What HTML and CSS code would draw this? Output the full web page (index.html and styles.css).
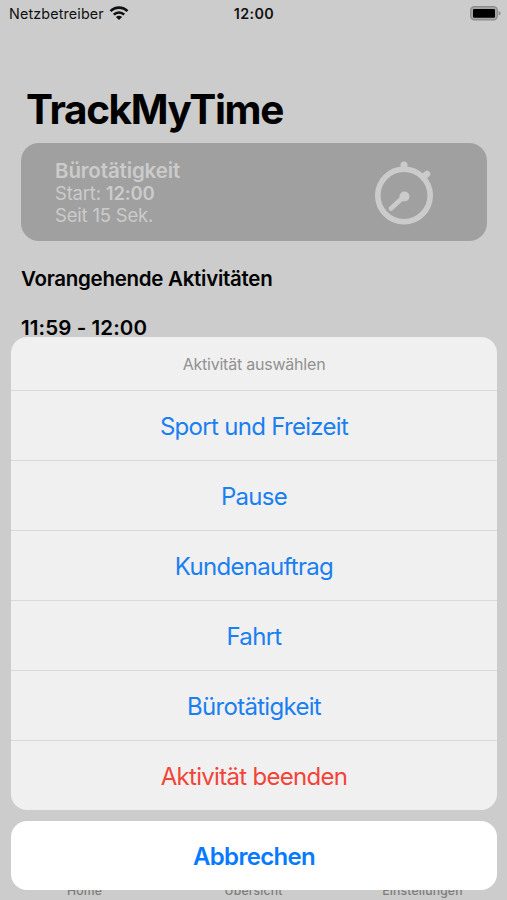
FILE: index.html
```html
<!DOCTYPE html>
<html lang="de">
<head>
  <meta charset="UTF-8" />
  <meta name="viewport" content="width=device-width, initial-scale=1.0" />
  <title>TrackMyTime</title>
  <link rel="stylesheet" href="styles.css">
</head>
<body>
  <div class="screen">
    <header class="status-bar">
      <div class="carrier">
        <span>Netzbetreiber</span>
        <svg class="wifi" viewBox="0 0 20 15">
          <g fill="none" stroke="#111" stroke-width="2.6">
            <path d="M1.5 5.2a12 12 0 0 1 17 0" />
            <path d="M4.8 8.7a7.3 7.3 0 0 1 10.4 0" />
          </g>
          <path d="M10 14.1L6.9 11.1a4.5 4.5 0 0 1 6.2 0z" fill="#111" />
        </svg>
      </div>
      <span class="clock">12:00</span>
      <svg class="battery" viewBox="0 0 31 15">
        <rect x="0.7" y="0.7" width="26.6" height="13.2" rx="3.6" fill="#a6a6a6" stroke="#8c8c8c" stroke-width="1.2" />
        <rect x="3" y="3" width="22" height="8.8" rx="1.2" fill="#000" />
        <path d="M28.6 5c1.4.5 2 1.3 2 2.3s-.6 1.8-2 2.3z" fill="#8c8c8c" />
      </svg>
    </header>

    <h1>TrackMyTime</h1>

    <section class="current">
      <div class="current-text">
        <p class="current-name">Bürotätigkeit</p>
        <p>Start: <b>12:00</b></p>
        <p class="since">Seit 15 Sek.</p>
      </div>
      <svg class="stopwatch" viewBox="0 0 60 66">
        <g fill="none" stroke="#cbcbcb" stroke-linecap="round">
          <circle cx="30" cy="36.5" r="26.2" stroke-width="5.6" />
          <path d="M30 8v-2" stroke-width="7" />
          <path d="M50 17.5l3-2.5" stroke-width="6.5" />
          <path d="M30 37.5L17 49.5" stroke-width="4.6" />
        </g>
        <circle cx="30.5" cy="37.5" r="5" fill="#cbcbcb" />
      </svg>
    </section>

    <h2>Vorangehende Aktivitäten</h2>
    <p class="period">11:59 - 12:00</p>

    <nav class="tabs">
      <span>Home</span>
      <span>Übersicht</span>
      <span>Einstellungen</span>
    </nav>

    <div class="sheet">
      <div class="actions">
        <p class="sheet-title">Aktivität auswählen</p>
        <button>Sport und Freizeit</button>
        <button>Pause</button>
        <button>Kundenauftrag</button>
        <button>Fahrt</button>
        <button>Bürotätigkeit</button>
        <button class="destructive">Aktivität beenden</button>
      </div>
      <button class="cancel">Abbrechen</button>
    </div>
  </div>
</body>
</html>
```
FILE: styles.css
```css
* {
  box-sizing: border-box;
}
body {
  margin: 0;
  font-family: Inter, 'Liberation Sans', sans-serif;
  color: #000;
}
h1, h2, p {
  margin: 0;
  white-space: nowrap;
}
.screen {
  position: relative;
  display: flex;
  flex-direction: column;
  width: 507px;
  height: 900px;
  overflow: hidden;
  background: #cccccc;
}
.status-bar {
  display: grid;
  grid-template-columns: 1fr auto 1fr;
  align-items: center;
  height: 27px;
  padding: 0 6px 0 9px;
  font-size: 14.3px;
  letter-spacing: 0.15px;
  color: #111;
}
.carrier {
  display: flex;
  align-items: center;
  gap: 5px;
}
.wifi {
  width: 20px;
  height: 15px;
}
.clock {
  margin-left: -2px;
  font-weight: 600;
  letter-spacing: 0.4px;
}
.battery {
  width: 31px;
  height: 15px;
  justify-self: end;
}
h1 {
  margin: 58px 0 0 26px;
  font-size: 40.5px;
  line-height: 50px;
  font-weight: 650;
  letter-spacing: -1.35px;
}
.current {
  display: flex;
  justify-content: space-between;
  margin: 8px 20px 0 21px;
  height: 98px;
  padding: 16px 53px 0 34px;
  border-radius: 18px;
  background: #a0a0a0;
  color: #cbcbcb;
  font-size: 18.5px;
  line-height: 22px;
  letter-spacing: -0.2px;
}
.current-name {
  font-size: 20.5px;
  line-height: 23px;
  font-weight: 600;
  letter-spacing: -0.13px;
}
.current b {
  font-weight: 600;
}
.stopwatch {
  width: 60px;
  height: 66px;
}
h2, .period {
  margin-left: 21px;
  font-size: 20.5px;
  line-height: 26px;
  font-weight: 600;
}
h2 {
  margin-top: 25px;
  letter-spacing: -0.28px;
}
.period {
  margin-top: 23px;
  letter-spacing: 0.1px;
}
.tabs {
  display: grid;
  grid-template-columns: repeat(3, 1fr);
  margin-top: auto;
  padding-bottom: 2px;
  font-size: 12.2px;
  line-height: 15px;
  letter-spacing: 0.15px;
  text-align: center;
  color: #7d7d7d;
  font-weight: 500;
}
.sheet {
  position: absolute;
  left: 11px;
  right: 10px;
  bottom: 10px;
}
.actions {
  border-radius: 16px;
  background: #f0f0f0;
  overflow: hidden;
}
.sheet-title {
  height: 53px;
  line-height: 55px;
  font-size: 16px;
  letter-spacing: -0.22px;
  text-align: center;
  color: #919191;
}
button {
  display: block;
  width: 100%;
  height: 70px;
  padding: 2px 0 0;
  border: none;
  border-top: 1px solid #d9d9d9;
  background: none;
  font-family: inherit;
  font-size: 24px;
  letter-spacing: -0.7px;
  color: #1a7ff0;
}
.destructive {
  color: #f24438;
}
.cancel {
  margin-top: 11px;
  height: 69px;
  padding: 1px 0 0;
  border-top: none;
  border-radius: 16px;
  background: #fff;
  color: #087aff;
  font-weight: 600;
}
```
